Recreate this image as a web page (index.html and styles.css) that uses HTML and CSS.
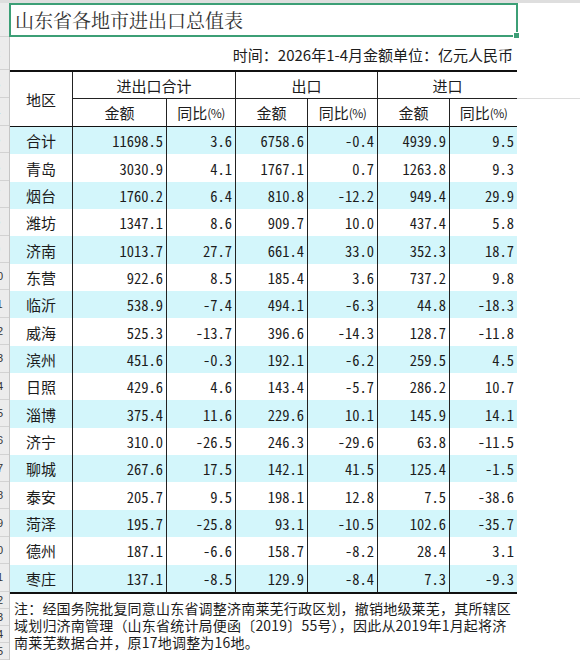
FILE: index.html
```html
<!DOCTYPE html>
<html lang="zh-CN">
<head>
<meta charset="utf-8">
<title>山东省各地市进出口总值表</title>
<link rel="stylesheet" href="styles.css">
</head>
<body>
<div class="topband"></div>
<div class="sheet">
  <div class="rowhdr">
    <div class="rh h-title"><span>1</span></div>
    <div class="rh h-sub"><span>2</span></div>
    <div class="rh h-head"><span>3</span></div>
    <div class="rh h-head"><span>4</span></div>
    <div class="rh h-data"><span>5</span></div>
    <div class="rh h-data"><span>6</span></div>
    <div class="rh h-data"><span>7</span></div>
    <div class="rh h-data"><span>8</span></div>
    <div class="rh h-data"><span>9</span></div>
    <div class="rh h-data"><span>10</span></div>
    <div class="rh h-data"><span>11</span></div>
    <div class="rh h-data"><span>12</span></div>
    <div class="rh h-data"><span>13</span></div>
    <div class="rh h-data"><span>14</span></div>
    <div class="rh h-data"><span>15</span></div>
    <div class="rh h-data"><span>16</span></div>
    <div class="rh h-data"><span>17</span></div>
    <div class="rh h-data"><span>18</span></div>
    <div class="rh h-data"><span>19</span></div>
    <div class="rh h-data"><span>20</span></div>
    <div class="rh h-data"><span>21</span></div>
    <div class="rh h-note"><span>22</span></div>
    <div class="rh h-note"><span>23</span></div>
    <div class="rh h-note"><span>24</span></div>
    <div class="rh h-note"><span>25</span></div>
  </div>
  <div class="main">
    <div class="title">山东省各地市进出口总值表<span class="handle"></span></div>
    <div class="subtitle">时间：2026年1-4月金额单位：亿元人民币</div>
    <div class="tablewrap">
      <table class="data">
        <colgroup>
          <col class="c1"><col class="c2"><col class="c3"><col class="c4"><col class="c5"><col class="c6"><col class="c7">
        </colgroup>
        <thead>
          <tr class="hr1">
            <th rowspan="2" class="region">地区</th>
            <th colspan="2" class="grp">进出口合计</th>
            <th colspan="2" class="grp">出口</th>
            <th colspan="2" class="grp">进口</th>
          </tr>
          <tr class="hr2">
            <th class="sub">金额</th><th class="sub">同比<small>(%)</small></th>
            <th class="sub">金额</th><th class="sub">同比<small>(%)</small></th>
            <th class="sub">金额</th><th class="sub">同比<small>(%)</small></th>
          </tr>
        </thead>
        <tbody>
          <tr class="alt"><td class="name">合计</td><td>11698.5</td><td>3.6</td><td>6758.6</td><td>-0.4</td><td>4939.9</td><td>9.5</td></tr>
          <tr><td class="name">青岛</td><td>3030.9</td><td>4.1</td><td>1767.1</td><td>0.7</td><td>1263.8</td><td>9.3</td></tr>
          <tr class="alt"><td class="name">烟台</td><td>1760.2</td><td>6.4</td><td>810.8</td><td>-12.2</td><td>949.4</td><td>29.9</td></tr>
          <tr><td class="name">潍坊</td><td>1347.1</td><td>8.6</td><td>909.7</td><td>10.0</td><td>437.4</td><td>5.8</td></tr>
          <tr class="alt"><td class="name">济南</td><td>1013.7</td><td>27.7</td><td>661.4</td><td>33.0</td><td>352.3</td><td>18.7</td></tr>
          <tr><td class="name">东营</td><td>922.6</td><td>8.5</td><td>185.4</td><td>3.6</td><td>737.2</td><td>9.8</td></tr>
          <tr class="alt"><td class="name">临沂</td><td>538.9</td><td>-7.4</td><td>494.1</td><td>-6.3</td><td>44.8</td><td>-18.3</td></tr>
          <tr><td class="name">威海</td><td>525.3</td><td>-13.7</td><td>396.6</td><td>-14.3</td><td>128.7</td><td>-11.8</td></tr>
          <tr class="alt"><td class="name">滨州</td><td>451.6</td><td>-0.3</td><td>192.1</td><td>-6.2</td><td>259.5</td><td>4.5</td></tr>
          <tr><td class="name">日照</td><td>429.6</td><td>4.6</td><td>143.4</td><td>-5.7</td><td>286.2</td><td>10.7</td></tr>
          <tr class="alt"><td class="name">淄博</td><td>375.4</td><td>11.6</td><td>229.6</td><td>10.1</td><td>145.9</td><td>14.1</td></tr>
          <tr><td class="name">济宁</td><td>310.0</td><td>-26.5</td><td>246.3</td><td>-29.6</td><td>63.8</td><td>-11.5</td></tr>
          <tr class="alt"><td class="name">聊城</td><td>267.6</td><td>17.5</td><td>142.1</td><td>41.5</td><td>125.4</td><td>-1.5</td></tr>
          <tr><td class="name">泰安</td><td>205.7</td><td>9.5</td><td>198.1</td><td>12.8</td><td>7.5</td><td>-38.6</td></tr>
          <tr class="alt"><td class="name">菏泽</td><td>195.7</td><td>-25.8</td><td>93.1</td><td>-10.5</td><td>102.6</td><td>-35.7</td></tr>
          <tr><td class="name">德州</td><td>187.1</td><td>-6.6</td><td>158.7</td><td>-8.2</td><td>28.4</td><td>3.1</td></tr>
          <tr class="alt"><td class="name">枣庄</td><td>137.1</td><td>-8.5</td><td>129.9</td><td>-8.4</td><td>7.3</td><td>-9.3</td></tr>
        </tbody>
      </table>
    </div>
    <p class="note">注：经国务院批复同意山东省调整济南莱芜行政区划，撤销地级莱芜，其所辖区<br>域划归济南管理（山东省统计局便函〔2019〕55号），因此从2019年1月起将济<br>南莱芜数据合并，原17地调整为16地。</p>
  </div>
</div>
</body>
</html>
```

FILE: styles.css
```css
html, body {
  margin: 0;
  padding: 0;
}
body {
  width: 580px;
  height: 664px;
  overflow: hidden;
  background: #ffffff;
  color: #1c1c1c;
  font-family: "Noto Sans CJK SC", sans-serif;
}
.topband {
  height: 3px;
  background: #dedede;
}
.sheet {
  display: flex;
  align-items: flex-start;
}
.rowhdr {
  width: 9px;
  flex: none;
  background: #ececec;
  border-right: 1px solid #c6c6c6;
  display: flex;
  flex-direction: column;
}
.rh {
  box-sizing: border-box;
  border-bottom: 1px solid #d2d2d2;
  overflow: hidden;
  display: flex;
  justify-content: flex-end;
  align-items: center;
  font: 11px "Liberation Sans", sans-serif;
  color: #333;
}
.rh span {
  flex: none;
  width: 30px;
  text-align: center;
  margin-right: -3px;
}
.h-title { height: 34px; }
.h-sub { height: 33px; }
.h-head { height: 28px; }
.h-data { height: 27.4px; }
.h-note { height: 17px; }

.main {
  flex: none;
  width: 570px;
}
.title {
  position: relative;
  box-sizing: border-box;
  margin-left: -1px;
  width: 509px;
  height: 34px;
  border: 2px solid #3c9f76;
  padding-left: 4px;
  font-family: "Noto Serif CJK SC", "Noto Sans CJK SC", serif;
  font-size: 19px;
  line-height: 29px;
  color: #333;
}
.handle {
  position: absolute;
  right: -4px;
  bottom: -4px;
  width: 5px;
  height: 5px;
  background: #3c9f76;
  border: 1px solid #fff;
}
.subtitle {
  box-sizing: border-box;
  width: 507px;
  height: 33px;
  padding: 9px 4px 0 0;
  text-align: right;
  font-size: 15px;
  line-height: 18px;
  color: #1c1c1c;
}
.tablewrap {
  background: linear-gradient(#dcdcdc, #dcdcdc) 0 28px / 100% 1px no-repeat;
}
table.data {
  table-layout: fixed;
  border-collapse: separate;
  border-spacing: 0;
  width: 507px;
  border-top: 2px solid #111;
  border-bottom: 2px solid #111;
}
col.c1 { width: 62px; }
col.c2 { width: 94px; }
col.c3 { width: 69px; }
col.c4 { width: 72px; }
col.c5 { width: 70px; }
col.c6 { width: 72px; }
col.c7 { width: 68px; }

th {
  font-weight: normal;
  font-size: 15px;
  padding: 0;
  text-align: center;
  background: #fff;
  color: #1c1c1c;
}
.hr1 { height: 27px; }
.hr2 { height: 28px; }
th.region {
  border-bottom: 1px solid #111;
}
th.grp {
  border-left: 1px solid #222;
  border-bottom: 1px solid #222;
}
th.sub {
  border-left: 1px solid #222;
  border-bottom: 1px solid #111;
}
th small {
  font-size: 12px;
  letter-spacing: -0.5px;
  vertical-align: 1px;
}
tbody tr {
  height: 27.35px;
  background: #ffffff;
}
tbody tr.alt {
  background: #d3f6fb;
}
td {
  padding: 0 3px 0 0;
  text-align: right;
  font-family: "Noto Sans Mono CJK SC", "Liberation Mono", monospace;
  font-size: 14.5px;
  border-left: 1px solid #222;
  color: #1c1c1c;
}
td.name {
  border-left: none;
  padding: 0;
  text-align: center;
  font-family: "Noto Sans CJK SC", sans-serif;
  font-size: 15px;
}
.note {
  margin: 0;
  padding: 6px 0 0 4px;
  font-size: 14px;
  line-height: 17px;
  letter-spacing: 0.2px;
  color: #1c1c1c;
  white-space: nowrap;
}
```
